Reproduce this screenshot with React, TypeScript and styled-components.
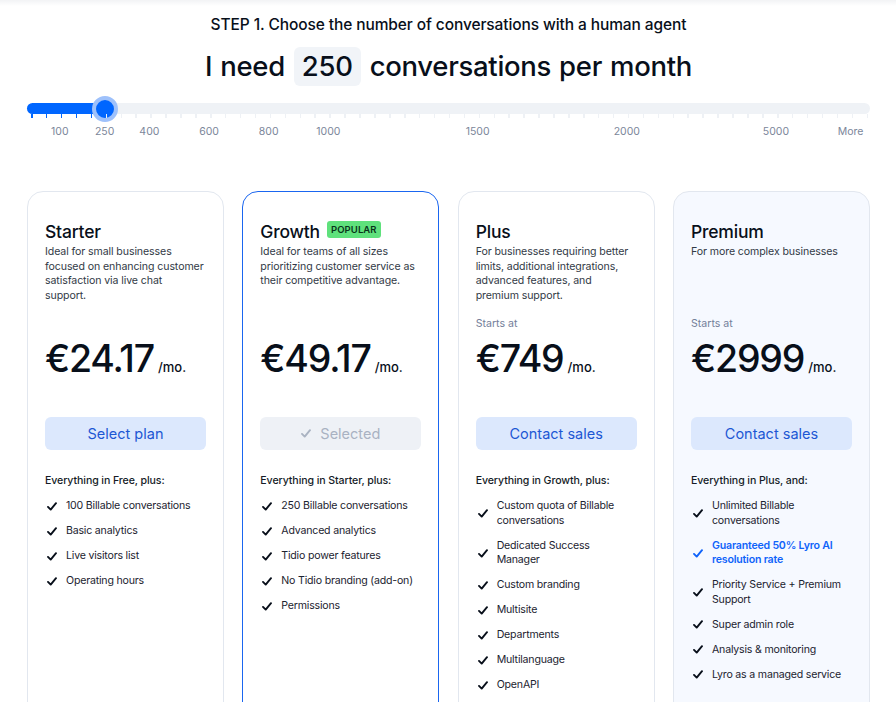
import styled, { createGlobalStyle } from "styled-components";

const GlobalStyle = createGlobalStyle`
    html, body {
        margin: 0;
        padding: 0;
        background: #ffffff;
        overflow: hidden;
    }
    body {
        font-family: Inter, "Noto Sans", sans-serif;
        color: #080f1a;
    }
`;

interface Plan {
    name: string;
    popular?: boolean;
    description: string[];
    startsAt?: boolean;
    price: string;
    button: string;
    selected?: boolean;
    tinted?: boolean;
    intro: string;
    features: { text: string; highlight?: boolean }[];
}

// description is kept per line so the wrapping matches the design
const plans: Plan[] = [
    {
        name: "Starter",
        description: ["Ideal for small businesses", "focused on enhancing customer", "satisfaction via live chat", "support."],
        price: "€24.17",
        button: "Select plan",
        intro: "Everything in Free, plus:",
        features: [
            {text: "100 Billable conversations"},
            {text: "Basic analytics"},
            {text: "Live visitors list"},
            {text: "Operating hours"},
        ],
    },
    {
        name: "Growth",
        popular: true,
        description: ["Ideal for teams of all sizes", "prioritizing customer service as", "their competitive advantage."],
        price: "€49.17",
        button: "Selected",
        selected: true,
        intro: "Everything in Starter, plus:",
        features: [
            {text: "250 Billable conversations"},
            {text: "Advanced analytics"},
            {text: "Tidio power features"},
            {text: "No Tidio branding (add-on)"},
            {text: "Permissions"},
        ],
    },
    {
        name: "Plus",
        description: ["For businesses requiring better", "limits, additional integrations,", "advanced features, and", "premium support."],
        startsAt: true,
        price: "€749",
        button: "Contact sales",
        intro: "Everything in Growth, plus:",
        features: [
            {text: "Custom quota of Billable conversations"},
            {text: "Dedicated Success Manager"},
            {text: "Custom branding"},
            {text: "Multisite"},
            {text: "Departments"},
            {text: "Multilanguage"},
            {text: "OpenAPI"},
        ],
    },
    {
        name: "Premium",
        description: ["For more complex businesses"],
        startsAt: true,
        price: "€2999",
        button: "Contact sales",
        tinted: true,
        intro: "Everything in Plus, and:",
        features: [
            {text: "Unlimited Billable conversations"},
            {text: "Guaranteed 50% Lyro AI resolution rate", highlight: true},
            {text: "Priority Service + Premium Support"},
            {text: "Super admin role"},
            {text: "Analysis & monitoring"},
            {text: "Lyro as a managed service"},
        ],
    },
];

const labels = [
    {value: "100", tick: 2},
    {value: "250", tick: 5},
    {value: "400", tick: 8},
    {value: "600", tick: 12},
    {value: "800", tick: 16},
    {value: "1000", tick: 20},
    {value: "1500", tick: 30},
    {value: "2000", tick: 40},
    {value: "5000", tick: 50},
    {value: "More", tick: 55},
];

const TICK_COUNT = 57;
const TICK_START = 4;
const TICK_STEP = 14.92;

const CheckIcon = ({color = "#080f1a"}: { color?: string }) => (
    <svg width="10" height="9" viewBox="0 0 10 9" fill="none">
        <path d="M1 4.9 L3.7 7.6 L9 1.2" stroke={color} strokeWidth="1.9" strokeLinecap="round" strokeLinejoin="round"/>
    </svg>
);

const App = () => {
    const thumbTick = 5;
    return (
        <>
            <GlobalStyle/>
            <TopShade/>
            <Page>
                <Step>STEP 1. Choose the number of conversations with a human agent</Step>
                <Heading>
                    I need <Amount>250</Amount> conversations per month
                </Heading>

                <Slider>
                    <Track>
                        <Fill style={{width: TICK_START + thumbTick * TICK_STEP}}/>
                        <Thumb style={{left: TICK_START + thumbTick * TICK_STEP - 1}}/>
                    </Track>
                    <Ticks>
                        {Array.from({length: TICK_COUNT}).map((_, i) => (
                            <Tick key={i} $active={i < thumbTick}
                                  style={{left: TICK_START + i * TICK_STEP}}/>
                        ))}
                    </Ticks>
                    <Labels>
                        {labels.map((l) => (
                            <Label key={l.value} style={{left: TICK_START + l.tick * TICK_STEP - 1}}>{l.value}</Label>
                        ))}
                    </Labels>
                </Slider>

                <Cards>
                    {plans.map((plan) => (
                        <Card key={plan.name} $selected={plan.selected} $tinted={plan.tinted}>
                            <NameRow>
                                <PlanName>{plan.name}</PlanName>
                                {plan.popular && <Badge>POPULAR</Badge>}
                            </NameRow>
                            <Description>
                                {plan.description.map((line) => (
                                    <DescLine key={line}>{line}</DescLine>
                                ))}
                            </Description>
                            <StartsAt>{plan.startsAt ? "Starts at" : ""}</StartsAt>
                            <PriceRow>
                                <Price>{plan.price}</Price>
                                <Per>/mo.</Per>
                            </PriceRow>
                            <PlanButton $selected={plan.selected}>
                                {plan.selected && <CheckIcon color="#aab3c2"/>}
                                {plan.button}
                            </PlanButton>
                            <Intro>{plan.intro}</Intro>
                            <Features>
                                {plan.features.map((f) => (
                                    <Feature key={f.text} $highlight={f.highlight}>
                                        <CheckWrap>
                                            <CheckIcon color={f.highlight ? "#0f63fa" : "#080f1a"}/>
                                        </CheckWrap>
                                        <span>{f.text}</span>
                                    </Feature>
                                ))}
                            </Features>
                        </Card>
                    ))}
                </Cards>
            </Page>
        </>
    );
};

export default App;

const TopShade = styled.div`
    position: absolute;
    top: 0;
    left: 0;
    right: 0;
    height: 6px;
    background: linear-gradient(#f2f3f5, #ffffff);
`;

const Page = styled.div`
    width: 896px;
    box-sizing: border-box;
    padding: 14px 26px 0 27px;
    display: flex;
    flex-direction: column;
    align-items: stretch;
`;

const Step = styled.div`
    text-align: center;
    font-size: 15.5px;
    font-weight: 500;
    line-height: 22px;
    letter-spacing: -0.1px;
`;

const Heading = styled.h1`
    margin: 11px 0 0;
    display: flex;
    justify-content: center;
    align-items: center;
    gap: 9px;
    font-size: 27.5px;
    font-weight: 500;
    letter-spacing: -0.3px;
    line-height: 39px;
    word-spacing: 1px;
`;

const Amount = styled.span`
    display: inline-block;
    background: #f1f4f8;
    border-radius: 6px;
    padding: 0 8px;
    height: 39px;
    line-height: 39px;
`;

const Slider = styled.div`
    margin-top: 17px;
    height: 48px;
    position: relative;
`;

const Track = styled.div`
    position: relative;
    height: 11px;
    border-radius: 6px;
    background: #eff2f6;
`;

const Fill = styled.div`
    height: 11px;
    border-radius: 6px 0 0 6px;
    background: #0066ff;
`;

const Thumb = styled.div`
    position: absolute;
    top: 50%;
    width: 18px;
    height: 18px;
    margin: -13px 0 0 -13px;
    border-radius: 50%;
    background: #0066ff;
    border: 4px solid #9ec1fb;
`;

const Ticks = styled.div`
    position: relative;
    height: 5px;
`;

const Tick = styled.div<{ $active?: boolean }>`
    position: absolute;
    top: 0;
    width: 1.5px;
    height: 4px;
    background: ${({$active}) => ($active ? "#0066ff" : "#eef1f5")};
`;

const Labels = styled.div`
    position: relative;
    margin-top: 6px;
`;

const Label = styled.span`
    position: absolute;
    transform: translateX(-50%);
    font-size: 10.5px;
    color: #7b869a;
    white-space: nowrap;
`;

const Cards = styled.div`
    margin-top: 40px;
    display: grid;
    grid-template-columns: repeat(4, 197px);
    justify-content: space-between;
`;

const Card = styled.div<{ $selected?: boolean; $tinted?: boolean }>`
    box-sizing: border-box;
    height: 560px;
    border-radius: 16px;
    border: 1px solid ${({$selected}) => ($selected ? "#1a66f0" : "#e2e7ef")};
    background: ${({$tinted}) => ($tinted ? "#f6f9ff" : "#ffffff")};
    padding: 28px 12px 0 17px;
    display: flex;
    flex-direction: column;
`;

const NameRow = styled.div`
    display: flex;
    align-items: center;
    gap: 7px;
    height: 22px;
`;

const PlanName = styled.div`
    font-size: 17.5px;
    font-weight: 500;
    letter-spacing: -0.2px;
`;

const Badge = styled.span`
    background: #5fe17c;
    color: #08331a;
    font-size: 9.5px;
    font-weight: 600;
    line-height: 17px;
    padding: 0 4px;
    border-radius: 3px;
    letter-spacing: 0.1px;
    margin-top: -3px;
`;

const Description = styled.p`
    margin: 3px 0 0;
    font-size: 10.6px;
    line-height: 14.5px;
    letter-spacing: -0.1px;
    color: #323a46;
    height: 58px;
`;

const DescLine = styled.span`
    display: block;
    white-space: nowrap;
`;

const StartsAt = styled.div`
    margin-top: 14px;
    height: 14px;
    font-size: 10.6px;
    color: #74809a;
`;

const PriceRow = styled.div`
    margin-top: 5px;
    display: flex;
    align-items: baseline;
    gap: 4px;
    height: 44px;
`;

const Price = styled.span`
    font-size: 37.5px;
    font-weight: 500;
    letter-spacing: -1.2px;
`;

const Per = styled.span`
    font-size: 13px;
    font-weight: 500;
`;

const PlanButton = styled.button<{ $selected?: boolean }>`
    margin-top: 37px;
    margin-right: 5px;
    height: 33px;
    border: none;
    border-radius: 6px;
    background: ${({$selected}) => ($selected ? "#eef1f6" : "#dce8fd")};
    color: ${({$selected}) => ($selected ? "#a9b2c2" : "#1c57d4")};
    font-family: inherit;
    font-size: 14.5px;
    display: flex;
    align-items: center;
    justify-content: center;
    gap: 9px;
`;

const Intro = styled.div`
    margin-top: 24px;
    font-size: 10.6px;
    font-weight: 500;
    letter-spacing: -0.1px;
    color: #151c27;
`;

const Features = styled.ul`
    list-style: none;
    margin: 12px 0 0;
    padding: 0;
    display: flex;
    flex-direction: column;
    gap: 10.5px;
`;

const Feature = styled.li<{ $highlight?: boolean }>`
    display: flex;
    align-items: center;
    gap: 9px;
    font-size: 10.6px;
    line-height: 14.5px;
    letter-spacing: -0.2px;
    color: ${({$highlight}) => ($highlight ? "#0f63fa" : "#1c2330")};
    font-weight: ${({$highlight}) => ($highlight ? 600 : 400)};
    padding-right: 8px;
`;

const CheckWrap = styled.span`
    display: flex;
    flex: none;
    padding-left: 2px;
`;
